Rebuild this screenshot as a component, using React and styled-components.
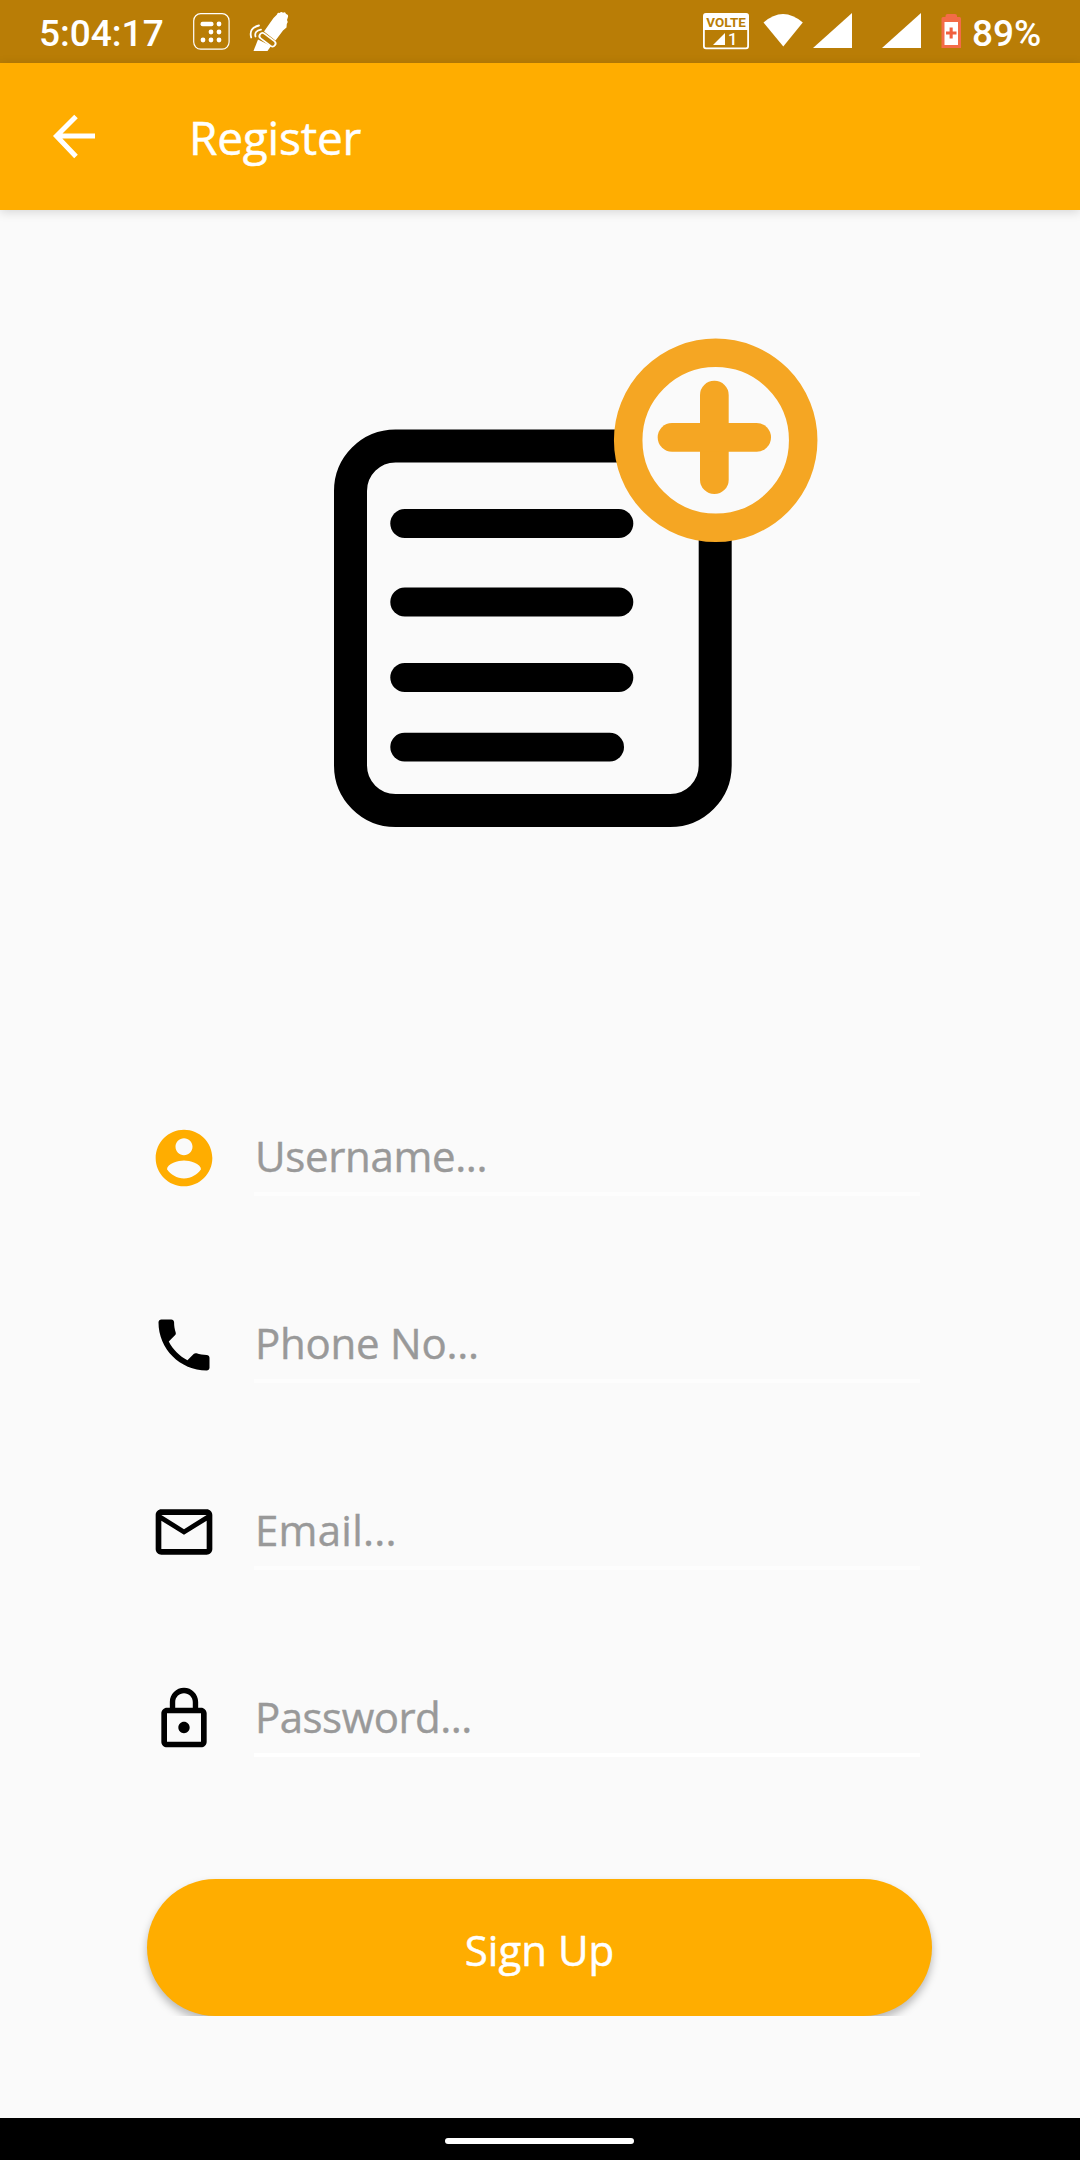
import React from "react";
import styled, { createGlobalStyle } from "styled-components";

const GlobalStyle = createGlobalStyle`
  *, *::before, *::after { box-sizing: border-box; }
  body { margin: 0; background: #fafafa; }
  svg { display: block; flex: none; }
`;

const Screen = styled.div`
  display: flex;
  flex-direction: column;
  width: 1080px;
  height: 2160px;
  background: #fafafa;
  overflow: hidden;
  font-family: "Open Sans", "Noto Sans", sans-serif;
`;

const StatusBar = styled.header`
  display: flex;
  justify-content: space-between;
  height: 63px;
  padding: 0 39px 0 39px;
  background: #b97d06;
  color: #fff;
  font-family: Roboto, sans-serif;
`;

const StatusGroup = styled.div`
  display: flex;
  align-items: flex-start;
`;

const StatusText = styled.span`
  width: ${(p) => p.$width}px;
  padding-top: 12px;
  padding-left: ${(p) => p.$inset || 0}px;
  font-size: 37px;
  font-weight: 500;
  line-height: 43px;
  white-space: nowrap;
`;

const StatusIcon = styled.svg`
  height: 63px;
  width: ${(p) => p.$width}px;
  margin-left: ${(p) => p.$gap}px;
`;

const AppBar = styled.div`
  display: flex;
  align-items: center;
  flex: none;
  height: 147px;
  padding-left: 40px;
  background: #ffad00;
  color: #fff;
  box-shadow: 0 2px 10px rgba(0, 0, 0, 0.15);
  z-index: 1;
`;

const BackButton = styled.button`
  width: 68px;
  height: 68px;
  margin: 0 81px 0 0;
  padding: 0;
  border: 0;
  background: none;
  color: inherit;
`;

const Title = styled.h1`
  margin: 0;
  font-size: 46px;
  font-weight: 400;
  line-height: 60px;
  letter-spacing: -0.2px;
  -webkit-text-stroke: 0.5px currentColor;
`;

const Content = styled.main`
  display: flex;
  flex-direction: column;
  flex: 1;
`;

const Hero = styled.svg`
  width: 520px;
  height: 520px;
  margin: 110px 0 0 320px;
`;

const Form = styled.form`
  display: flex;
  flex-direction: column;
  margin: 261px 160px 0 150px;
`;

const Field = styled.label`
  display: flex;
  align-items: flex-start;
  height: 187px;
  padding-top: 23px;
`;

const FieldIcon = styled.svg`
  width: 68px;
  height: 68px;
  fill: ${(p) => p.$color || "#000"};
`;

const FieldText = styled.span`
  flex: 1;
  height: 72px;
  margin-left: 36px;
  padding: 2px 0 0 1px;
  border-bottom: 4px solid ${(p) => p.$line};
  color: #999;
  font-size: 42px;
  line-height: 60px;
  letter-spacing: ${(p) => p.$spacing}px;
  -webkit-text-stroke: 0.4px currentColor;
`;

const ButtonClip = styled.div`
  display: flex;
  height: 142px;
  padding: 5px 20px 0;
  margin: 25px 128px 0 127px;
  overflow: hidden;
`;

const SignUpButton = styled.button`
  flex: 1;
  height: 137px;
  padding: 4px 0 0 0;
  border: 0;
  border-radius: 69px;
  background: #ffad00;
  box-shadow: 0 5px 8px rgba(0, 0, 0, 0.27);
  color: #fff;
  font-family: inherit;
  font-size: 42px;
  line-height: 60px;
  -webkit-text-stroke: 0.5px currentColor;
`;

const NavBar = styled.footer`
  display: flex;
  justify-content: center;
  flex: none;
  height: 42px;
  padding: 20px 1px 0 0;
  background: #000;
`;

const HomePill = styled.div`
  width: 189px;
  height: 6px;
  border-radius: 3px;
  background: #fff;
`;

const KeypadIcon = () => (
  <StatusIcon $width={37} $gap={0} viewBox="193 0 37 63" fill="#fff">
    <rect x="193.700" y="13.700" width="35.400" height="35.400" rx="7" fill="none" stroke="#fff" strokeWidth="1.200" />
    <rect x="200.500" y="21.700" width="13" height="4.500" rx="2" />
    <circle cx="219" cy="24" r="2.400" />
    <circle cx="211" cy="32" r="2.400" />
    <circle cx="219" cy="32" r="2.400" />
    <circle cx="203" cy="40" r="2.400" />
    <circle cx="211" cy="40" r="2.400" />
    <circle cx="219" cy="40" r="2.400" />
  </StatusIcon>
);

const HandIcon = () => (
  <StatusIcon $width={40} $gap={19} viewBox="249 0 40 63" fill="#fff">
    <path d="M264 31.500 L273.500 18 L277 14.500 Q277.500 11.800 279.500 13 Q281.500 11 283 12.800 Q285.500 11.500 286 14 Q289 14.500 287.800 17.500 L287 20 Q288.600 22 286.800 24 L286.500 27.500 L283 30.500 L275.500 40.500 Z" />
    <path d="M258 39.500 L271 46 L267.500 51 H253.500 Z" />
    <path d="M262.500 36 L272.500 43.500" fill="none" stroke="#fff" strokeWidth="7.800" strokeLinecap="round" />
    <path d="M262.500 36 L272.500 43.500" fill="none" stroke="#b97d06" strokeWidth="4.200" strokeLinecap="round" />
    <path d="M251.200 37.500 Q248.500 28 259 25.500 M255.500 36.500 Q254 31 261 29.600" fill="none" stroke="#fff" strokeWidth="1.800" strokeLinecap="round" />
  </StatusIcon>
);

const VolteIcon = () => (
  <StatusIcon $width={46} $gap={0} viewBox="703 0 46 63">
    <rect x="703.900" y="13.900" width="44.200" height="34.400" rx="2" fill="none" stroke="#fff" strokeWidth="1.800" />
    <rect x="704" y="14" width="44" height="16" fill="#fff" />
    <text x="706.300" y="27" fill="#b97d06" fontFamily="Roboto, sans-serif" fontWeight="700" fontSize="13.500" textLength="39.500" lengthAdjust="spacingAndGlyphs">VOLTE</text>
    <path d="M713 45 L725 33 V45 Z" fill="#fff" />
    <text x="728" y="45" fill="#fff" fontFamily="Roboto, sans-serif" fontSize="16.500" fontWeight="500">1</text>
  </StatusIcon>
);

const WifiIcon = () => (
  <StatusIcon $width={40} $gap={14} viewBox="762 0 40 63" fill="#fff">
    <path d="M762.500 22.500 Q782 5.500 801.800 22.500 L782.300 46.500 Z" />
  </StatusIcon>
);

const SignalIcon = ({ gap }) => (
  <StatusIcon $width={39} $gap={gap} viewBox="812 0 39 63" fill="#fff">
    <path d="M812 48 L851 13 V48 Z" />
  </StatusIcon>
);

const BatteryIcon = () => (
  <StatusIcon $width={21} $gap={20} viewBox="941 0 21 63">
    <path d="M945.500 17 V16 Q945.500 14 947.500 14 H955 Q957 14 957 16 V17 H959.500 Q961 17 961 18.500 V48 H941.500 V18.500 Q941.500 17 943 17 Z" fill="#f36c48" />
    <rect x="944.500" y="22" width="13.500" height="23" fill="#fff" />
    <path d="M949.600 27.500 H952.700 V31.500 H956.500 V34.600 H952.700 V38.500 H949.600 V34.600 H946 V31.500 H949.600 Z" fill="#f0603f" />
  </StatusIcon>
);

const fields = [
  {
    label: "Username...",
    color: "#ffad00",
    line: "#fdfdfd",
    spacing: -0.35,
    path: "M12 2C6.480 2 2 6.480 2 12s4.480 10 10 10 10-4.480 10-10S17.520 2 12 2zm0 3c1.660 0 3 1.340 3 3s-1.340 3-3 3-3-1.340-3-3 1.340-3 3-3zm0 14.200c-2.500 0-4.710-1.280-6-3.220.03-1.990 4-3.080 6-3.080 1.990 0 5.970 1.090 6 3.080-1.290 1.940-3.500 3.220-6 3.220z",
  },
  {
    label: "Phone No...",
    line: "#fdfdfd",
    spacing: -0.25,
    path: "M20 15.500c-1.250 0-2.450-.2-3.570-.57-.35-.11-.74-.03-1.020.24l-2.200 2.200c-2.830-1.440-5.150-3.750-6.590-6.590l2.200-2.210c.28-.26.36-.65.25-1C8.700 6.450 8.500 5.250 8.500 4c0-.55-.45-1-1-1H4c-.55 0-1 .45-1 1 0 9.390 7.610 17 17 17 .55 0 1-.45 1-1v-3.500c0-.55-.45-1-1-1z",
  },
  {
    label: "Email...",
    line: "#fdfdfd",
    spacing: 0.25,
    path: "M20 4H4c-1.100 0-2 .9-2 2v12c0 1.100.9 2 2 2h16c1.100 0 2-.9 2-2V6c0-1.100-.9-2-2-2zm0 14H4V8l8 5 8-5v10zm-8-7L4 6h16l-8 5z",
  },
  {
    label: "Password...",
    line: "#fff",
    spacing: -0.5,
    path: "M12 17c1.100 0 2-.9 2-2s-.9-2-2-2-2 .9-2 2 .9 2 2 2zm6-9h-1V6c0-2.760-2.240-5-5-5S7 3.240 7 6v2H6c-1.100 0-2 .9-2 2v10c0 1.100.9 2 2 2h12c1.100 0 2-.9 2-2V10c0-1.100-.9-2-2-2zM8.900 6c0-1.710 1.390-3.100 3.100-3.100s3.100 1.390 3.100 3.100v2H8.900V6zM18 20H6V10h12v10z",
  },
];

export default function App() {
  return (
    <Screen>
      <GlobalStyle />
      <StatusBar>
        <StatusGroup>
          <StatusText $width={154}>5:04:17</StatusText>
          <KeypadIcon />
          <HandIcon />
        </StatusGroup>
        <StatusGroup>
          <VolteIcon />
          <WifiIcon />
          <SignalIcon gap={10} />
          <SignalIcon gap={30} />
          <BatteryIcon />
          <StatusText $width={79} $inset={10}>89%</StatusText>
        </StatusGroup>
      </StatusBar>
      <AppBar>
        <BackButton type="button" aria-label="Back">
          <svg width="68" height="68" viewBox="0 0 68 68" fill="none" stroke="#fff" strokeWidth="5">
            <path d="M55 33 H16 M36 13.500 L16.500 33 L36 53.500" />
          </svg>
        </BackButton>
        <Title>Register</Title>
      </AppBar>
      <Content>
        <Hero viewBox="320 320 520 520">
          <rect x="350.500" y="446" width="364.700" height="364.600" rx="45" fill="none" stroke="#000" strokeWidth="33" />
          <rect x="390.300" y="509" width="243" height="29" rx="14.500" />
          <rect x="390.300" y="587.500" width="243" height="29" rx="14.500" />
          <rect x="390.300" y="663" width="243" height="29" rx="14.500" />
          <rect x="390.300" y="732.700" width="233.700" height="28.700" rx="14.300" />
          <circle cx="715.700" cy="440.300" r="87.500" fill="#fafafa" stroke="#f5a623" strokeWidth="28.500" />
          <rect x="700" y="380.700" width="28.700" height="113.300" rx="14.300" fill="#f5a623" />
          <rect x="657.700" y="423" width="113.300" height="28.700" rx="14.300" fill="#f5a623" />
        </Hero>
        <Form>
          {fields.map((f) => (
            <Field key={f.label}>
              <FieldIcon viewBox="0 0 24 24" $color={f.color}>
                <path d={f.path} />
              </FieldIcon>
              <FieldText $spacing={f.spacing} $line={f.line}>{f.label}</FieldText>
            </Field>
          ))}
        </Form>
        <ButtonClip>
          <SignUpButton type="button">Sign Up</SignUpButton>
        </ButtonClip>
      </Content>
      <NavBar>
        <HomePill />
      </NavBar>
    </Screen>
  );
}
